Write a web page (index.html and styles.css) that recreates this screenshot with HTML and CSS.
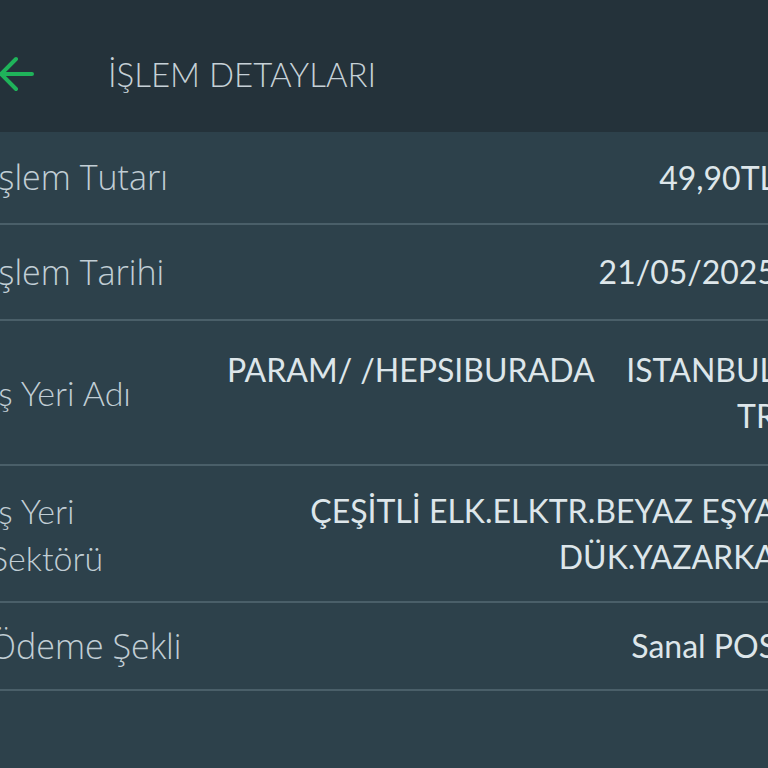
FILE: index.html
```html
<!DOCTYPE html>
<html lang="tr">
<head>
    <meta charset="UTF-8">
    <meta name="viewport" content="width=device-width, initial-scale=1.0">
    <title>İşlem Detayları</title>
    <link rel="stylesheet" href="styles.css">
</head>
<body>
    <div class="screen">
        <div class="top-bar">
            <button class="back-btn" aria-label="Geri">
                <svg width="40" height="40" viewBox="0 0 40 40">
                    <path d="M38 20H8M22 5L7 20l15 15" fill="none" stroke="#1fb35a" stroke-width="4" stroke-linecap="round" stroke-linejoin="round"/>
                </svg>
            </button>
            <h1>İŞLEM DETAYLARI</h1>
        </div>

        <div class="details">
            <div class="detail-row row-amount">
                <div class="detail-label">İşlem Tutarı</div>
                <div class="detail-value">49,90TL</div>
            </div>
            <div class="detail-row row-date">
                <div class="detail-label">İşlem Tarihi</div>
                <div class="detail-value">21/05/2025</div>
            </div>
            <div class="detail-row row-merchant">
                <div class="detail-label alt">İş Yeri Adı</div>
                <div class="detail-value">PARAM/ /HEPSIBURADA&nbsp;&nbsp;&nbsp; ISTANBUL<br>TR</div>
            </div>
            <div class="detail-row row-sector">
                <div class="detail-label alt">İş Yeri<br>Sektörü</div>
                <div class="detail-value">ÇEŞİTLİ ELK.ELKTR.BEYAZ EŞYA<br>DÜK.YAZARKA</div>
            </div>
            <div class="detail-row row-payment">
                <div class="detail-label">Ödeme Şekli</div>
                <div class="detail-value">Sanal POS</div>
            </div>
        </div>
    </div>
</body>
</html>
```

FILE: styles.css
```css
html, body {
    margin: 0;
    padding: 0;
    background: #2d414b;
    overflow: hidden;
}
body {
    font-family: Lato, "Open Sans", sans-serif;
    color: #d5dfe4;
}
.screen {
    width: 810px;
    margin-left: -12px;
    min-height: 768px;
}
.top-bar {
    display: flex;
    align-items: center;
    box-sizing: border-box;
    height: 132px;
    background: #24323a;
    padding: 15px 0 0 6px;
}
.back-btn {
    background: none;
    border: 0;
    padding: 0;
    width: 40px;
    height: 40px;
    margin-right: 74px;
}
.top-bar h1 {
    margin: 0;
    font-size: 33px;
    font-weight: 300;
    color: #c6d1d7;
}
.detail-row {
    display: flex;
    align-items: center;
    border-bottom: 2px solid #4a5f69;
    padding: 0 22px 0 2px;
}
.row-amount { height: 91px; }
.row-date { height: 94px; }
.row-merchant { height: 143px; }
.row-sector { height: 135px; }
.row-payment { height: 86px; }

.detail-label {
    width: 200px;
    flex-shrink: 0;
    font-family: "Open Sans", sans-serif;
    font-size: 34px;
    font-weight: 300;
    line-height: 47px;
    color: #c1ced5;
}
.detail-label.alt {
    font-family: Lato, sans-serif;
    font-size: 34px;
}
.detail-value {
    flex: 1;
    text-align: right;
    font-size: 32px;
    font-weight: 400;
    line-height: 46px;
    color: #dde6ea;
}
```
